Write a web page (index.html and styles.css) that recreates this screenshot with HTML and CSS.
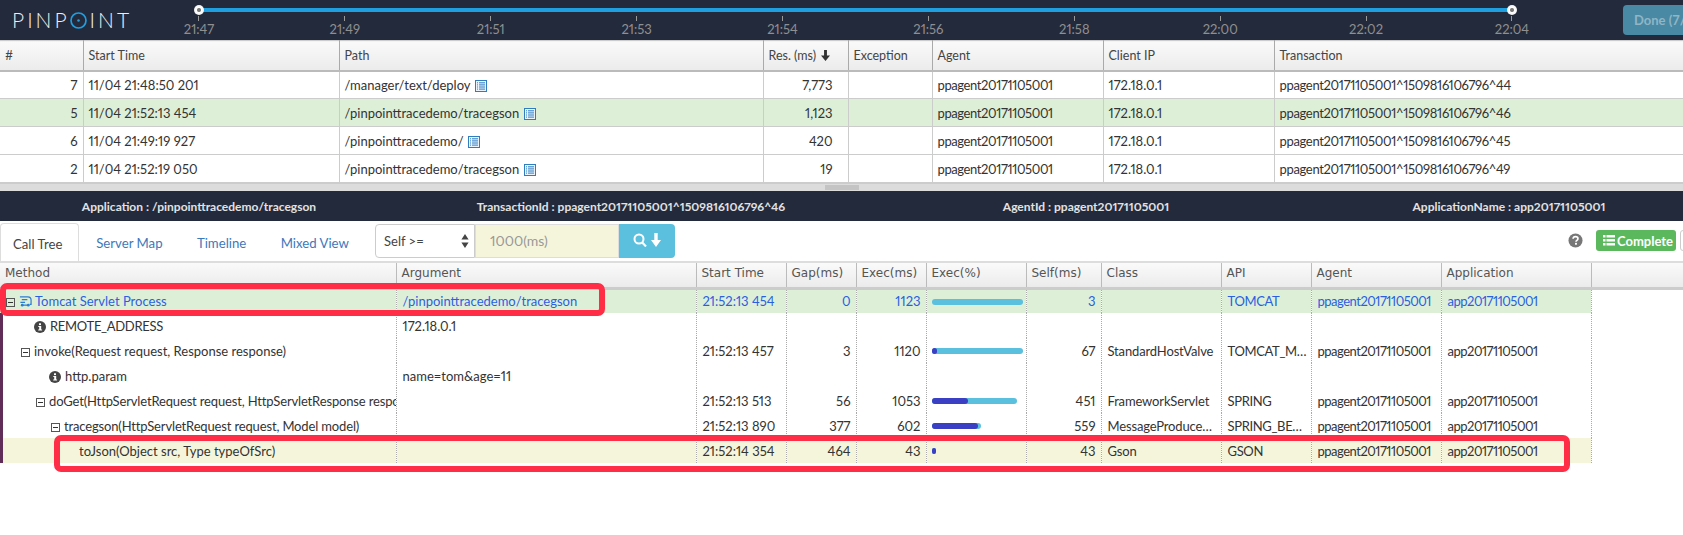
FILE: index.html
```html
<!DOCTYPE html>
<html lang="en">

<head>
    <meta charset="UTF-8">
    <title>Pinpoint Transaction List</title>
    <link rel="stylesheet" href="styles.css">
</head>

<body>
    <!-- TOP BAR -->
    <header class="topbar">
        <div class="logo">PINP<svg class="logoRing" viewBox="0 0 20 20"><circle cx="10" cy="10" r="8.800" fill="none" stroke="#1f9fe0" stroke-width="2"/><circle cx="10" cy="10" r="1.500" fill="#1f9fe0"/></svg>INT</div>
        <div class="timeline">
            <div class="rangeLine"><span class="handle handleLeft"></span><span class="handle handleRight"></span></div>
            <div class="ticks">
                <span class="tick">21:47</span><span class="tick">21:49</span><span class="tick">21:51</span><span class="tick">21:53</span><span class="tick">21:54</span><span class="tick">21:56</span><span class="tick">21:58</span><span class="tick">22:00</span><span class="tick">22:02</span><span class="tick">22:04</span>
            </div>
        </div>
        <button class="doneBtn">Done (7/7)</button>
    </header>

    <!-- TRANSACTION LIST -->
    <table class="listTable">
        <colgroup>
            <col class="cNum"><col class="cStart"><col class="cPath"><col class="cRes"><col class="cExc"><col class="cAgent"><col class="cIp"><col class="cTx">
        </colgroup>
        <thead>
            <tr><th>#</th><th>Start Time</th><th>Path</th><th>Res. (ms) <svg class="sortIcon" viewBox="0 0 10 12"><path d="M3.400 0h3.200v6H10L5 12 0 6h3.400z" fill="#333"/></svg></th><th>Exception</th><th>Agent</th><th>Client IP</th><th>Transaction</th></tr>
        </thead>
        <tbody>
            <tr><td class="num">7</td><td>11/04 21:48:50 201</td><td>/manager/text/deploy <svg class="docIcon" viewBox="0 0 12 12"><use href="#doc"/></svg></td><td class="num res">7,773</td><td></td><td>ppagent20171105001</td><td>172.18.0.1</td><td>ppagent20171105001^1509816106796^44</td></tr>
            <tr class="selected"><td class="num">5</td><td>11/04 21:52:13 454</td><td>/pinpointtracedemo/tracegson <svg class="docIcon" viewBox="0 0 12 12"><use href="#doc"/></svg></td><td class="num res">1,123</td><td></td><td>ppagent20171105001</td><td>172.18.0.1</td><td>ppagent20171105001^1509816106796^46</td></tr>
            <tr><td class="num">6</td><td>11/04 21:49:19 927</td><td>/pinpointtracedemo/ <svg class="docIcon" viewBox="0 0 12 12"><use href="#doc"/></svg></td><td class="num res">420</td><td></td><td>ppagent20171105001</td><td>172.18.0.1</td><td>ppagent20171105001^1509816106796^45</td></tr>
            <tr><td class="num">2</td><td>11/04 21:52:19 050</td><td>/pinpointtracedemo/tracegson <svg class="docIcon" viewBox="0 0 12 12"><use href="#doc"/></svg></td><td class="num res">19</td><td></td><td>ppagent20171105001</td><td>172.18.0.1</td><td>ppagent20171105001^1509816106796^49</td></tr>
        </tbody>
    </table>
    <div class="splitter"><span class="grip"></span></div>

    <!-- TRANSACTION INFO -->
    <div class="infoBar">
        <span>Application : /pinpointtracedemo/tracegson</span>
        <span>TransactionId : ppagent20171105001^1509816106796^46</span>
        <span>AgentId : ppagent20171105001</span>
        <span>ApplicationName : app20171105001</span>
    </div>

    <!-- TABS -->
    <div class="tabBar">
        <a class="tab active">Call Tree</a>
        <a class="tab">Server Map</a>
        <a class="tab">Timeline</a>
        <a class="tab">Mixed View</a>
        <div class="searchGroup">
            <div class="selectBox">Self &gt;=<svg class="updown" viewBox="0 0 8 14"><path d="M4 0l3.600 5.600H.4zM4 14L.4 8.400h7.200z" fill="#444"/></svg></div>
            <div class="searchInput">1000(ms)</div>
            <button class="searchBtn"><svg viewBox="0 0 28 14" width="28" height="14"><circle cx="6" cy="6" r="4.500" fill="none" stroke="#fff" stroke-width="2"/><path d="M9.200 9.500l3.800 3.900" stroke="#fff" stroke-width="2.200"/><path d="M21.300 0h3.400v7H28l-5 7-5-7h3.300z" fill="#fff"/></svg></button>
        </div>
        <div class="tabRight">
            <svg class="helpIcon" viewBox="0 0 16 16"><circle cx="8" cy="8" r="7.500" fill="#777"/><path d="M5.400 6.200C5.500 4.700 6.600 3.900 8 3.900c1.500 0 2.600.8 2.600 2.100 0 1.900-2.100 1.700-2.100 3.300" fill="none" stroke="#fff" stroke-width="1.800"/><rect x="7.500" y="10.500" width="2" height="2" fill="#fff"/></svg>
            <button class="completeBtn"><svg viewBox="0 0 12 11" width="12" height="11"><path d="M0 0h2.500v2.500H0zM3.500 0H12v2.500H3.500zM0 4h2.500v2.500H0zM3.500 4H12v2.500H3.500zM0 8h2.500v2.500H0zM3.500 8H12v2.500H3.500z" fill="#fff"/></svg>Complete</button>
            <button class="otherBtn"></button>
        </div>
    </div>

    <!-- CALL TREE -->
    <div class="treeWrap">
        <table class="treeTable">
            <colgroup>
                <col class="tMethod"><col class="tArg"><col class="tStart"><col class="tGap"><col class="tExec"><col class="tPct"><col class="tSelf"><col class="tClass"><col class="tApi"><col class="tAgent"><col class="tApp"><col class="tFill">
            </colgroup>
            <thead>
                <tr><th>Method</th><th>Argument</th><th>Start Time</th><th>Gap(ms)</th><th>Exec(ms)</th><th>Exec(%)</th><th>Self(ms)</th><th>Class</th><th>API</th><th>Agent</th><th>Application</th><th></th></tr>
            </thead>
            <tbody>
                <tr class="selected link">
                    <td><span class="depth0"><svg class="toggle" viewBox="0 0 9 9"><use href="#minus"/></svg><svg class="serverIcon" viewBox="0 0 14 14"><path d="M1 2h8.500c2.300 0 3.500 1.500 3.500 3.500V10h-1.500M3 5h6M1.500 8h5M3.500 11H9" fill="none" stroke="#2b7cd3" stroke-width="1.300"/><circle cx="3.500" cy="11" r="1.500" fill="#2b7cd3"/><circle cx="10" cy="11" r="1.500" fill="#2b7cd3"/></svg>Tomcat Servlet Process</span></td>
                    <td>/pinpointtracedemo/tracegson</td><td>21:52:13 454</td><td class="num">0</td><td class="num">1123</td>
                    <td><div class="bar" style="width:91px"><div class="barSelf" style="width:0"></div></div></td>
                    <td class="num">3</td><td></td><td>TOMCAT</td><td>ppagent20171105001</td><td>app20171105001</td>
                </tr>
                <tr>
                    <td><span class="depthRemote"><svg class="infoIcon" viewBox="0 0 12 12"><use href="#info"/></svg>REMOTE_ADDRESS</span></td>
                    <td>172.18.0.1</td><td></td><td></td><td></td><td></td><td></td><td></td><td></td><td></td><td></td>
                </tr>
                <tr>
                    <td><span class="depth1"><svg class="toggle" viewBox="0 0 9 9"><use href="#minus"/></svg>invoke(Request request, Response response)</span></td>
                    <td></td><td>21:52:13 457</td><td class="num">3</td><td class="num">1120</td>
                    <td><div class="bar" style="width:91px"><div class="barSelf" style="width:5px"></div></div></td>
                    <td class="num">67</td><td>StandardHostValve</td><td>TOMCAT_METHOD</td><td>ppagent20171105001</td><td>app20171105001</td>
                </tr>
                <tr>
                    <td><span class="depthParam"><svg class="infoIcon" viewBox="0 0 12 12"><use href="#info"/></svg>http.param</span></td>
                    <td>name=tom&amp;age=11</td><td></td><td></td><td></td><td></td><td></td><td></td><td></td><td></td><td></td>
                </tr>
                <tr>
                    <td><span class="depth2"><svg class="toggle" viewBox="0 0 9 9"><use href="#minus"/></svg>doGet(HttpServletRequest request, HttpServletResponse response)</span></td>
                    <td></td><td>21:52:13 513</td><td class="num">56</td><td class="num">1053</td>
                    <td><div class="bar" style="width:85px"><div class="barSelf" style="width:36px"></div></div></td>
                    <td class="num">451</td><td>FrameworkServlet</td><td>SPRING</td><td>ppagent20171105001</td><td>app20171105001</td>
                </tr>
                <tr>
                    <td><span class="depth3"><svg class="toggle" viewBox="0 0 9 9"><use href="#minus"/></svg>tracegson(HttpServletRequest request, Model model)</span></td>
                    <td></td><td>21:52:13 890</td><td class="num">377</td><td class="num">602</td>
                    <td><div class="bar" style="width:49px"><div class="barSelf" style="width:46px"></div></div></td>
                    <td class="num">559</td><td>MessageProducerController</td><td>SPRING_BEAN</td><td>ppagent20171105001</td><td>app20171105001</td>
                </tr>
                <tr class="hilite">
                    <td><span class="depth5">toJson(Object src, Type typeOfSrc)</span></td>
                    <td></td><td>21:52:14 354</td><td class="num">464</td><td class="num">43</td>
                    <td><div class="bar" style="width:4px"><div class="barSelf" style="width:4px"></div></div></td>
                    <td class="num">43</td><td>Gson</td><td>GSON</td><td>ppagent20171105001</td><td>app20171105001</td>
                </tr>
            </tbody>
        </table>
        <div class="redBox redBoxTop"></div>
        <div class="redBox redBoxBottom"></div>
    </div>

    <svg class="defs" width="0" height="0">
        <symbol id="doc" viewBox="0 0 12 12"><rect x=".5" y=".5" width="11" height="11" fill="#eaf3fb" stroke="#2f7cc0"/><path d="M2 2.800h1M4 2.800h6M2 4.900h1M4 4.900h6M2 7h1M4 7h6M2 9.100h1M4 9.100h6" stroke="#2f7cc0"/></symbol>
        <symbol id="minus" viewBox="0 0 9 9"><rect x=".5" y=".5" width="8" height="8" fill="none" stroke="#555"/><path d="M2 4.500h5" stroke="#333"/></symbol>
        <symbol id="info" viewBox="0 0 12 12"><circle cx="6" cy="6" r="6" fill="#444"/><rect x="5" y="2.300" width="2" height="1.800" fill="#fff"/><path d="M4.300 5h2.900v3.600h.9v1H4.200v-1h1V6h-.9z" fill="#fff"/></symbol>
    </svg>
</body>

</html>
```

FILE: styles.css
```css
* {
    box-sizing: border-box;
}

body {
    margin: 0;
    width: 1683px;
    height: 535px;
    overflow: hidden;
    background: #fff;
    font-family: "Lato", sans-serif;
    font-variant-numeric: proportional-nums;
    color: #333;
}

/* top bar */
.topbar {
    display: flex;
    height: 40px;
    background: #232a3c;
    position: relative;
    overflow: hidden;
}

.logo {
    width: 125px;
    padding: 9px 0 0 12px;
    font-size: 21px;
    font-weight: 300;
    letter-spacing: 3px;
    color: #eee;
    white-space: nowrap;
    line-height: 22px;
}

.logoRing {
    width: 17px;
    height: 17px;
    vertical-align: -1px;
    margin-right: 3px;
}

.timeline {
    width: 1460px;
    margin-left: 1px;
    padding-top: 8px;
}

.rangeLine {
    height: 4px;
    margin-left: 73px;
    width: 1313px;
    background: #1f9fe0;
    position: relative;
}

.handle {
    position: absolute;
    top: -3px;
    width: 10px;
    height: 10px;
    border-radius: 50%;
    background: radial-gradient(#777 1.500px, #fff 2.500px, #e8e8e8);
}

.handleLeft {
    left: -5px;
}

.handleRight {
    right: -5px;
}

.ticks {
    display: flex;
    margin-top: 4px;
}

.tick {
    width: 145.9px;
    flex: none;
    text-align: center;
    font-size: 13px;
    line-height: 15px;
    padding-top: 6px;
    color: #8f8f8f;
    background: linear-gradient(#999, #999) center top / 1px 5px no-repeat;
}

.doneBtn {
    position: absolute;
    left: 1623px;
    top: 5px;
    width: 90px;
    height: 30px;
    border: 0;
    border-radius: 4px;
    background: #4a89a3;
    color: #8fb5c6;
    font-family: inherit;
    font-size: 13px;
    font-weight: 700;
    text-align: left;
    padding-left: 11px;
}

/* tables */
table {
    border-collapse: collapse;
    table-layout: fixed;
}

td,
th {
    overflow: hidden;
    white-space: nowrap;
    text-overflow: ellipsis;
    padding: 0 5px;
}

th {
    text-align: left;
    font-weight: 400;
}

.num {
    text-align: right;
}

.listTable {
    width: 1683px;
}

.cNum { width: 83px; }
.cStart { width: 256px; }
.cPath { width: 424px; }
.cRes { width: 85px; }
.cExc { width: 84px; }
.cAgent { width: 171px; }
.cIp { width: 171px; }
.cTx { width: 409px; }

.listTable th {
    height: 30px;
    font-size: 12.5px;
    border-top: 1px solid #ccc;
    border-bottom: 2px solid #bbb;
    border-right: 1px solid #aaa;
    background: linear-gradient(#fafafa, #ebebeb);
    color: #444;
}

.listTable td {
    height: 28px;
    font-size: 13px;
    border-bottom: 1px solid #ccc;
    border-right: 1px solid #ccc;
    color: #333;
}

/* digits run narrower in these columns */
.listTable td:nth-child(6) {
    letter-spacing: -0.4px;
}

.listTable td:nth-child(8) {
    letter-spacing: -0.33px;
}

.listTable td.res {
    padding-right: 15px;
}

.selected td {
    background: #deefd8;
}

.docIcon {
    width: 12px;
    height: 12px;
    vertical-align: -2px;
    margin-left: 1px;
}

.sortIcon {
    width: 9px;
    height: 11px;
    margin-left: 2px;
    vertical-align: -1px;
}

.splitter {
    height: 8px;
    background: #dcdcdc;
    border-top: 1px solid #ccc;
}

.grip {
    display: block;
    width: 34px;
    height: 5px;
    margin: 1px auto 0;
    background: #c4c4c4;
}

/* info bar */
.infoBar {
    display: grid;
    grid-template-columns: 398px 466px 444px 402px;
    align-items: center;
    height: 30px;
    background: #232a3c;
    color: #e2e2e2;
    font-size: 12px;
    font-weight: 700;
    text-align: center;
}

/* tabs */
.tabBar {
    display: flex;
    align-items: flex-start;
    height: 40px;
    padding-top: 2px;
    position: relative;
}

.tab {
    height: 38px;
    padding: 0 17.2px;
    line-height: 40px;
    font-size: 13.2px;
    color: #3d78bb;
}

.tab.active {
    width: 79px;
    padding: 0 12px;
    color: #444;
    border: 1px solid #ddd;
    border-bottom: 0;
    border-radius: 4px 4px 0 0;
    background: #fff;
}

.searchGroup {
    display: flex;
    position: absolute;
    left: 375px;
    top: 3px;
    height: 34px;
}

.selectBox {
    width: 100px;
    display: flex;
    align-items: center;
    justify-content: space-between;
    padding: 0 5px 0 8px;
    border: 1px solid #ccc;
    border-radius: 4px 0 0 4px;
    font-size: 13px;
    color: #444;
}

.updown {
    width: 8px;
    height: 14px;
}

.searchInput {
    width: 144px;
    padding-left: 14px;
    line-height: 32px;
    background: #f5f5dc;
    border: 1px solid #ddd;
    font-size: 14px;
    color: #999;
}

.searchBtn {
    width: 56px;
    border: 0;
    border-radius: 0 4px 4px 0;
    background: #5bc0de;
    padding: 0;
}

.tabRight {
    position: absolute;
    left: 1568px;
    top: 9px;
    display: flex;
    align-items: center;
    width: 160px;
}

.helpIcon {
    width: 15px;
    height: 15px;
    margin-right: 13px;
}

.completeBtn {
    display: flex;
    align-items: center;
    gap: 2px;
    width: 80px;
    height: 21px;
    padding: 0 0 0 7px;
    border: 0;
    border-radius: 3px;
    background: #5cb85c;
    color: #fff;
    font-family: inherit;
    font-size: 13px;
    font-weight: 700;
}

.otherBtn {
    width: 40px;
    height: 21px;
    margin-left: 4px;
    border: 1px solid #ccc;
    border-radius: 3px;
    background: #fff;
}

/* call tree */
.treeWrap {
    position: relative;
}

.treeTable {
    width: 1683px;
}

.tMethod { width: 396px; }
.tArg { width: 300px; }
.tStart { width: 90px; }
.tGap { width: 70px; }
.tExec { width: 70px; }
.tPct { width: 100px; }
.tSelf { width: 75px; }
.tClass { width: 120px; }
.tApi { width: 90px; }
.tAgent { width: 130px; }
.tApp { width: 150px; }
.tFill { width: 92px; }

.treeTable th {
    height: 26px;
    padding-bottom: 3px;
    font-family: "DejaVu Sans", sans-serif;
    font-size: 12px;
    color: #555;
    border-top: 2px solid #ddd;
    border-bottom: 3px solid #ccc;
    border-right: 1px solid #bbb;
    background: linear-gradient(#fafafa, #ebebeb);
}

.treeTable td {
    height: 25px;
    padding-left: 6px;
    font-size: 13px;
    color: #333;
    border-right: 1px dotted #aaa;
}

.treeTable th:last-child {
    border-right: 0;
}

.treeTable td:first-child {
    padding-left: 0;
    padding-right: 0;
    text-overflow: clip;
}

.treeTable td:nth-child(8) {
    letter-spacing: -0.15px;
}

.treeTable td:nth-child(9) {
    padding-right: 3px;
    letter-spacing: -0.35px;
}

.treeTable td:nth-child(10),
.treeTable td:nth-child(11) {
    letter-spacing: -0.5px;
}

.treeTable tbody tr:not(.selected) td:first-child {
    box-shadow: inset 3px 0 0 #5f2d57;
}

.link td {
    color: #2a5fe0;
}

.hilite td {
    background: #f5f5dc;
}

.depth0 { padding-left: 6px; }
.depth1 { padding-left: 21px; }
.depth2 { padding-left: 36px; letter-spacing: -0.15px; }
.depth3 { padding-left: 51px; letter-spacing: -0.15px; }
.depth5 { padding-left: 79px; }
.depthRemote { padding-left: 34px; letter-spacing: -0.3px; }
.depthParam { padding-left: 49px; }

.toggle {
    width: 9px;
    height: 9px;
    margin-right: 4px;
    vertical-align: -1px;
}

.serverIcon {
    width: 13px;
    height: 13px;
    margin: 0 3px 0 0;
    vertical-align: -2px;
}

.infoIcon {
    width: 12px;
    height: 12px;
    margin-right: 4px;
    vertical-align: -2px;
}

.bar {
    height: 6px;
    border-radius: 3px;
    background: #5bc0de;
    margin-top: 1px;
    margin-left: -1px;
}

.barSelf {
    height: 6px;
    border-radius: 3px;
    background: #3b3fc4;
}

.redBox {
    position: absolute;
    border: 6px solid #ff2d46;
    border-radius: 7px;
}

.redBoxTop {
    left: 0;
    top: 22px;
    width: 605px;
    height: 33px;
}

.redBoxBottom {
    left: 54px;
    top: 174px;
    width: 1516px;
    height: 37px;
}

.defs {
    position: absolute;
}
```
